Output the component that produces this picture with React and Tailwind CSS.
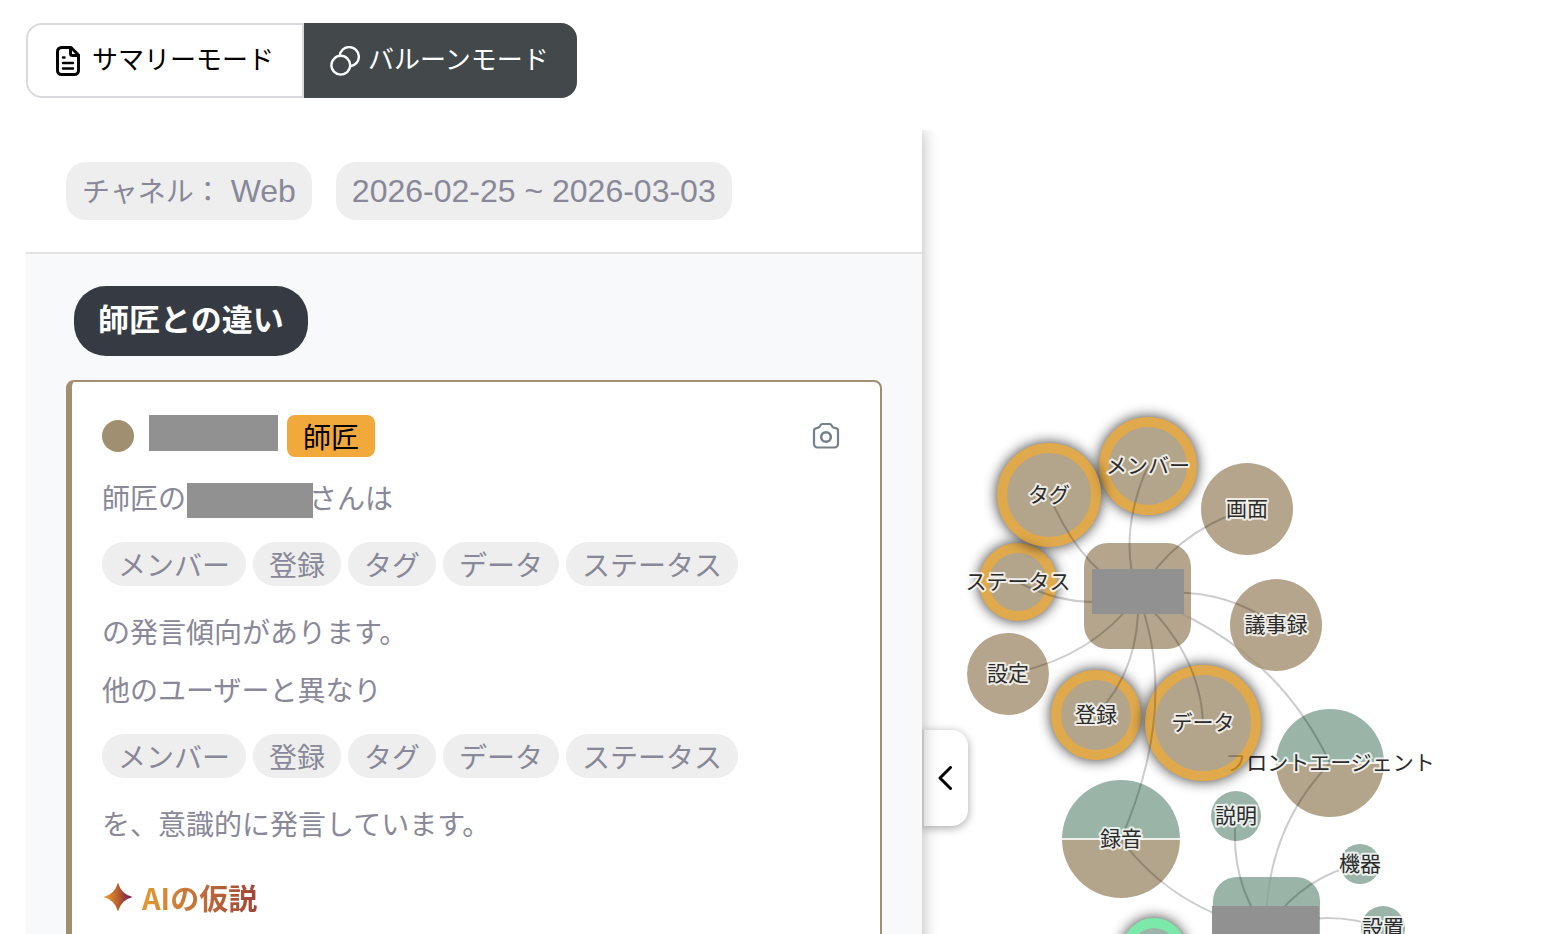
import React from 'react';

const TAN = '#a18f6f';
const GREEN = '#81a392';
const AMBER = '#d9941f';
const MINT = '#5be495';

const keywords = ['メンバー', '登録', 'タグ', 'データ', 'ステータス'];

// drawn first, so the highlighted nodes overlap its label
const backNode = { label: 'フロントエージェント', x: 1330, y: 763, r: 54, top: GREEN, bottom: TAN };

const nodes = [
  { label: '画面', x: 1247, y: 509, r: 46, top: TAN },
  { label: '議事録', x: 1276, y: 625, r: 46, top: TAN },
  { label: '設定', x: 1008, y: 674, r: 41, top: TAN },
  { label: '録音', x: 1121, y: 839, r: 59, top: GREEN, bottom: TAN },
  { label: '説明', x: 1236, y: 816, r: 25, top: GREEN },
  { label: '機器', x: 1360, y: 864, r: 20, top: GREEN },
  { label: '設置', x: 1383, y: 928, r: 22, top: GREEN },
  { label: 'ステータス', x: 1018, y: 582, r: 29, top: TAN, ring: AMBER },
  { label: 'メンバー', x: 1148, y: 466, r: 39, top: TAN, ring: AMBER },
  { label: 'タグ', x: 1049, y: 495, r: 42, top: TAN, ring: AMBER },
  { label: '登録', x: 1096, y: 715, r: 35, top: TAN, ring: AMBER },
  { label: 'データ', x: 1203, y: 723, r: 48, top: TAN, ring: AMBER },
  { label: '', x: 1154, y: 950, r: 22, top: GREEN, ring: MINT },
];

const backEdges = [
  'M1138 596Q1272 641 1330 763',
  'M1266 930Q1265 830 1330 763',
];

const edges = [
  'M1049 495Q1081 571 1138 596',
  'M1148 466Q1117 535 1138 596',
  'M1018 582Q1077 613 1138 596',
  'M1008 674Q1091 659 1138 596',
  'M1096 715Q1141 668 1138 596',
  'M1203 723Q1200 653 1138 596',
  'M1121 839Q1180 703 1138 596',
  'M1247 509Q1172 533 1138 596',
  'M1276 625Q1215 582 1138 596',
  'M1236 816Q1229 881 1266 930',
  'M1360 864Q1301 877 1266 930',
  'M1383 928Q1325 907 1266 930',
  'M1121 839Q1172 909 1266 930',
];

function DocumentIcon() {
  return (
    <svg width="24" height="30" viewBox="0 0 24 30" fill="none" stroke="currentColor" strokeWidth="3" strokeLinecap="round" strokeLinejoin="round">
      <path d="M15 1.500H5.500a4 4 0 0 0-4 4v19a4 4 0 0 0 4 4h13a4 4 0 0 0 4-4V9z" />
      <path d="M14.500 2v5.500a2 2 0 0 0 2 2h5.500" />
      <path d="M7 11.500h1.500M7 17h10M7 22.500h10" strokeWidth="2.400" />
    </svg>
  );
}

function BalloonIcon() {
  return (
    <svg width="30" height="30" viewBox="0 0 30 30" fill="none" stroke="currentColor" strokeWidth="2.4">
      <circle cx="10.800" cy="19.200" r="9.400" />
      <path d="M9.700 9.600A9.600 9.600 0 1 1 20.400 20.200" />
    </svg>
  );
}

function CameraIcon() {
  return (
    <svg width="32" height="32" viewBox="0 0 32 32" fill="none" stroke="currentColor" strokeWidth="2.2" strokeLinejoin="round">
      <path d="M12.300 4h7.400c1.200 0 1.600.7 2 1.700.5 1.300 1.200 2 2.600 2.200l1.300.2c1.600.2 2.400 1.200 2.400 2.700V24a3.500 3.500 0 0 1-3.500 3.500h-17A3.500 3.500 0 0 1 4 24V10.800c0-1.500.8-2.500 2.400-2.700l1.300-.2c1.400-.2 2.100-.9 2.600-2.200.4-1 .8-1.700 2-1.700z" />
      <circle cx="16" cy="17" r="4.800" strokeWidth="2.600" />
    </svg>
  );
}

function SparkIcon() {
  return (
    <svg width="32" height="32" viewBox="0 0 32 32">
      <defs>
        <linearGradient id="spark">
          <stop offset="0" stopColor="#f0a030" />
          <stop offset="0.5" stopColor="#b8602f" />
          <stop offset="1" stopColor="#701050" />
        </linearGradient>
      </defs>
      <path d="M16 1.500Q19 13 30.500 16Q19 19 16 30.500Q13 19 1.500 16Q13 13 16 1.500z" fill="url(#spark)" />
    </svg>
  );
}

function Keywords() {
  return (
    <ul className="my-4 flex flex-wrap gap-[7px]">
      {keywords.map((word) => (
        <li key={word} className="rounded-[22px] bg-[#eeeeee] px-4 leading-[44px]">{word}</li>
      ))}
    </ul>
  );
}

function Label({ node }) {
  return (
    <text
      x={node.x}
      y={node.y + 7}
      textAnchor="middle"
      fill="#2b2b2b"
      stroke="#ffffff"
      strokeOpacity="0.8"
      strokeWidth="4"
      strokeLinejoin="round"
      paintOrder="stroke"
      className="text-[21px]"
    >
      {node.label}
    </text>
  );
}

function Balloon({ node }) {
  const { x, y, r, top, bottom, ring } = node;
  return (
    <g opacity="0.8" filter={ring ? 'url(#glow)' : undefined}>
      {bottom ? (
        <>
          <path d={`M${x - r} ${y}a${r} ${r} 0 0 1 ${r * 2} 0z`} fill={top} />
          <path d={`M${x - r} ${y}a${r} ${r} 0 0 0 ${r * 2} 0z`} fill={bottom} />
          <path d={`M${x - r} ${y}h${r * 2}`} stroke="#ffffff" strokeOpacity="0.8" strokeWidth="2" />
        </>
      ) : (
        <circle cx={x} cy={y} r={ring ? r + 2 : r} fill={top} />
      )}
      {ring && <circle cx={x} cy={y} r={r + 5} fill="none" stroke={ring} strokeWidth="10" />}
    </g>
  );
}

function Edges({ paths }) {
  return paths.map((d) => (
    <path key={d} d={d} fill="none" stroke="#000000" strokeOpacity="0.2" strokeWidth="2" />
  ));
}

function BalloonMap() {
  return (
    <svg className="h-full w-full" viewBox="922 130 620 804" preserveAspectRatio="xMinYMin meet" role="img" aria-label="バルーンマップ">
      <defs>
        <filter id="glow" x="-50%" y="-50%" width="200%" height="200%" colorInterpolationFilters="sRGB">
          <feDropShadow dx="0" dy="0" stdDeviation="7" floodColor="#000000" floodOpacity="1" />
        </filter>
      </defs>
      <Balloon node={backNode} />
      <Edges paths={backEdges} />
      <Label node={backNode} />
      <rect x="1084" y="543" width="107" height="106" rx="24" fill={TAN} fillOpacity="0.8" />
      <rect x="1213" y="877" width="107" height="106" rx="24" fill={GREEN} fillOpacity="0.8" />
      {nodes.map((node) => <Balloon key={node.label} node={node} />)}
      <Edges paths={edges} />
      {nodes.map((node) => <Label key={node.label} node={node} />)}
      <rect x="1092" y="569" width="92" height="45" fill="#919191" />
      <rect x="1212" y="906" width="107" height="60" fill="#919191" />
    </svg>
  );
}

function App() {
  return (
    <div className="flex h-screen flex-col overflow-hidden bg-white pl-[26px] font-['Liberation_Sans','Noto_Sans_CJK_JP',sans-serif] text-black">
      <nav className="flex pt-[23px] pb-8 text-[26px] leading-[43px]">
        <button className="flex items-center gap-3 rounded-l-2xl border-2 border-[#d9d9df] px-7 py-[14px]">
          <DocumentIcon />
          <span>サマリーモード</span>
        </button>
        <button className="flex items-center gap-2 rounded-r-2xl bg-[#43484b] py-4 pr-7 pl-[26px] text-white">
          <BalloonIcon />
          <span>バルーンモード</span>
        </button>
      </nav>

      <main className="grid min-h-0 flex-1 grid-cols-[896fr_620fr] overflow-hidden">
        <section className="z-10 flex min-w-0 flex-col bg-[#f8f9fb] text-[#888899] shadow-[0_0_16px_rgba(0,0,0,0.3)]">
          <header className="flex gap-6 border-b-2 border-[#e2e2e2] bg-white px-10 py-8 text-[32px] leading-[58px]">
            <span className="rounded-[20px] bg-[#eeeeee] px-4 whitespace-nowrap">
              <span className="text-[28px] leading-none">チャネル：</span> Web
            </span>
            <span className="rounded-[20px] bg-[#eeeeee] px-4 whitespace-nowrap">2026-02-25 ~ 2026-03-03</span>
          </header>

          <div className="min-h-0 flex-1 overflow-hidden px-10 pt-8">
            <h2 className="ml-2 w-fit rounded-[32px] bg-[#363a42] px-6 text-[31px] leading-[70px] font-bold text-white">師匠との違い</h2>

            <article className="mt-6 rounded-lg border-2 border-l-6 border-[#a08f70] bg-white px-[30px] pt-[30px] pb-10 font-['Noto_Sans_CJK_JP',sans-serif] text-[28px] leading-[58px]">
              <div className="mb-2 flex items-center">
                <span className="size-8 rounded-full bg-[#a08f70]" />
                <span className="mr-[9px] mb-[6px] ml-[15px] h-9 w-[129px] bg-[#919191]" />
                <span className="rounded-lg bg-[#f1a93c] px-4 leading-[42px] text-black">師匠</span>
                <button aria-label="画像を保存" className="ml-auto p-2 text-[#758088]">
                  <CameraIcon />
                </button>
              </div>
              <p className="flex items-center">
                師匠の
                <span className="mt-[6px] ml-px h-[35px] w-[126px] bg-[#919191]" />
                <span className="-ml-1">さんは</span>
              </p>
              <Keywords />
              <p>の発言傾向があります。</p>
              <p>他のユーザーと異なり</p>
              <Keywords />
              <p>を、意識的に発言しています。</p>
              <h3 className="mt-4 flex items-center gap-2 text-[29px] font-bold">
                <SparkIcon />
                <span className="bg-linear-to-r from-[#e29a32] to-[#a04438] bg-clip-text text-transparent">AIの仮説</span>
              </h3>
            </article>
          </div>
        </section>

        <section className="relative min-w-0">
          <BalloonMap />
          <button aria-label="パネルを閉じる" className="absolute top-[600px] left-0 flex h-24 w-[46px] items-center justify-center rounded-r-2xl border-l-2 border-[#e2e2e2] bg-white shadow-[0_2px_10px_rgba(0,0,0,0.35)]">
            <svg width="16" height="24" viewBox="0 0 16 24" fill="none" stroke="currentColor" strokeWidth="3" strokeLinecap="round" strokeLinejoin="round">
              <path d="M12.500 1.500L2 12l10.500 10.500" />
            </svg>
          </button>
        </section>
      </main>
    </div>
  );
}

export default App;
